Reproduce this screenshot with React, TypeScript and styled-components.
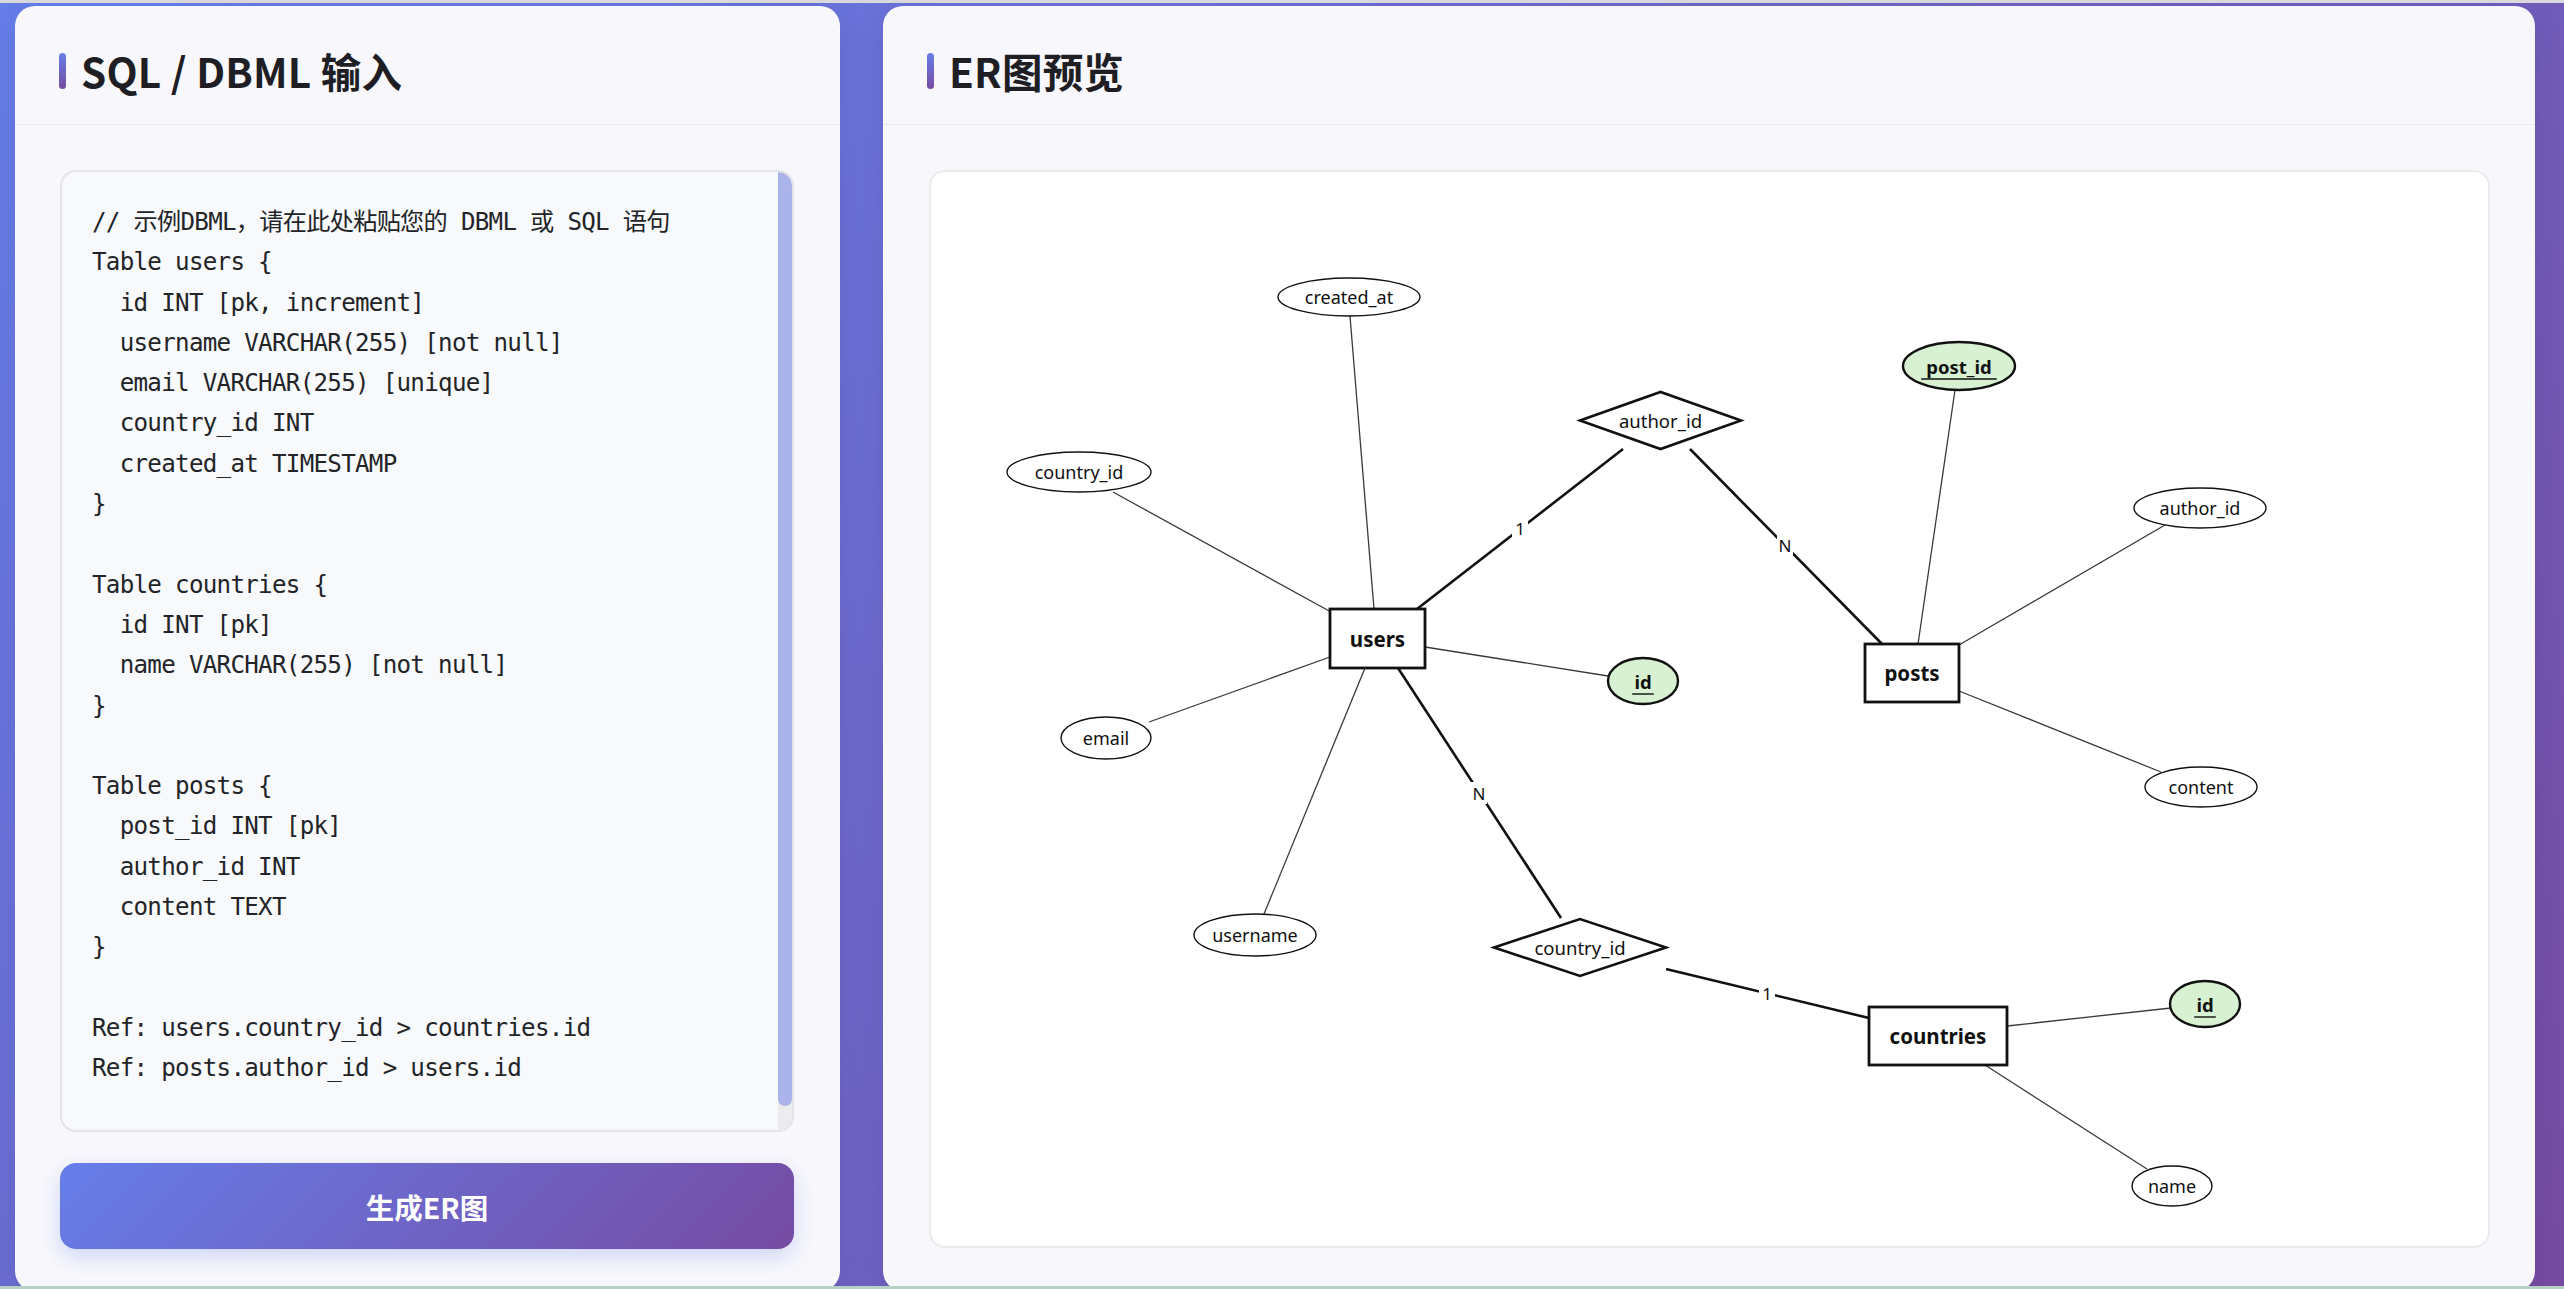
import React from 'react';
import styled, { createGlobalStyle } from 'styled-components';

const GlobalStyle = createGlobalStyle`
  html {
    background: #b6d0c3;
    overflow: hidden;
  }
  body {
    margin: 0;
    border-top: 3px solid #d9d9dc;
    font-family: "Noto Sans CJK SC", "Noto Sans", sans-serif;
    overflow: hidden;
  }
  * { box-sizing: border-box; }
`;

const Page = styled.div`
  height: 1283px;
  overflow: hidden;
  background: linear-gradient(135deg, #667eea 0%, #764ba2 100%);
  padding: 3px 29px 0 15px;
  display: grid;
  grid-template-columns: 825px 1652px;
  column-gap: 43px;
  align-items: stretch;
`;

const Panel = styled.section`
  background: #f8f8fc;
  border-radius: 20px;
  display: flex;
  flex-direction: column;
  box-shadow: 0 10px 30px rgba(40, 30, 90, 0.12);
`;

const PanelHeader = styled.header`
  display: flex;
  align-items: center;
  gap: 15px;
  padding: 47px 44px 35px;
  border-bottom: 1px solid #e9e9ef;
`;

const AccentBar = styled.span`
  flex: none;
  width: 7px;
  height: 36px;
  border-radius: 4px;
  background: linear-gradient(180deg, #667eea 0%, #764ba2 100%);
`;

const Title = styled.h2`
  margin: 0;
  font-family: "Noto Sans CJK SC", sans-serif;
  font-weight: 700;
  font-size: 40.5px;
  line-height: 36px;
  color: #1e1e24;
  letter-spacing: 0.2px;
`;

const PanelBody = styled.div<{ $pad: string }>`
  flex: 1;
  display: flex;
  flex-direction: column;
  padding: ${(p) => p.$pad};
  min-height: 0;
`;

const EditorFrame = styled.div`
  position: relative;
  height: 962px;
`;

const CodeInput = styled.textarea`
  display: block;
  width: 100%;
  height: 100%;
  resize: none;
  border: 2px solid #e3e3e8;
  border-radius: 16px;
  background: #f8f9fb;
  padding: 30px 44px 30px 30px;
  font-family: "DejaVu Sans Mono", "Noto Sans CJK SC", monospace;
  font-size: 24.2px;
  letter-spacing: -0.72px;
  line-height: 40.3px;
  color: #222428;
  outline: none;
  white-space: pre;
  overflow: hidden;
  scrollbar-width: none;
`;

const ScrollTrack = styled.div`
  position: absolute;
  top: 2px;
  right: 2px;
  bottom: 2px;
  width: 14px;
  background: #ececef;
  border-radius: 0 14px 14px 0;
  overflow: hidden;
  pointer-events: none;
`;

const ScrollThumb = styled.div`
  height: 934px;
  background: #aab4ea;
  border-radius: 0 14px 7px 7px;
`;

const GenerateButton = styled.button`
  margin-top: 31px;
  height: 86px;
  border: none;
  border-radius: 16px;
  background: linear-gradient(135deg, #667eea 0%, #764ba2 100%);
  color: #ffffff;
  font-family: "Noto Sans CJK SC", sans-serif;
  font-weight: 700;
  font-size: 28.5px;
  cursor: pointer;
  box-shadow: 0 8px 22px rgba(102, 126, 234, 0.28);
`;

const DiagramBox = styled.div`
  flex: 1;
  background: #ffffff;
  border: 2px solid #ebebee;
  border-radius: 16px;
  overflow: hidden;
`;

const DiagramSvg = styled.svg`
  display: block;
  width: 100%;
  height: 100%;
  font-family: "Noto Sans", "Open Sans", sans-serif;
`;

const AttrShape = styled.ellipse<{ $key?: boolean }>`
  fill: ${(p) => (p.$key ? '#d7f1d2' : '#ffffff')};
  stroke: #111;
  stroke-width: ${(p) => (p.$key ? 2.4 : 1.4)};
`;

const EntityShape = styled.rect`
  fill: #ffffff;
  stroke: #111;
  stroke-width: 2.8;
`;

const RelShape = styled.polygon`
  fill: #ffffff;
  stroke: #111;
  stroke-width: 2.6;
`;

const Edge = styled.line<{ $strong?: boolean }>`
  stroke: ${(p) => (p.$strong ? '#111' : '#3a3a3a')};
  stroke-width: ${(p) => (p.$strong ? 2.6 : 1.3)};
`;

const NodeText = styled.text<{ $bold?: boolean; $size: number }>`
  font-size: ${(p) => p.$size}px;
  font-weight: ${(p) => (p.$bold ? 700 : 400)};
  fill: #111;
`;

const Underline = styled.line`
  stroke: #111;
  stroke-width: 1.4;
`;

const LabelBg = styled.rect`
  fill: #ffffff;
`;

const CODE = `// 示例DBML，请在此处粘贴您的 DBML 或 SQL 语句
Table users {
  id INT [pk, increment]
  username VARCHAR(255) [not null]
  email VARCHAR(255) [unique]
  country_id INT
  created_at TIMESTAMP
}

Table countries {
  id INT [pk]
  name VARCHAR(255) [not null]
}

Table posts {
  post_id INT [pk]
  author_id INT
  content TEXT
}

Ref: users.country_id > countries.id
Ref: posts.author_id > users.id
`;

type Attr = { label: string; cx: number; cy: number; rx: number; ry: number; key?: boolean };
type Entity = { label: string; x: number; y: number; w: number; h: number };
type Rel = { label: string; cx: number; cy: number; hw: number; hh: number };
type Line = { x1: number; y1: number; x2: number; y2: number };
type StrongLine = Line & { label: string; lx: number; ly: number };

const attrs: Attr[] = [
  { label: 'created_at', cx: 1349, cy: 296, rx: 71, ry: 19 },
  { label: 'country_id', cx: 1079, cy: 471, rx: 72, ry: 20 },
  { label: 'email', cx: 1106, cy: 737, rx: 45, ry: 21 },
  { label: 'username', cx: 1255, cy: 934, rx: 61, ry: 21 },
  { label: 'id', cx: 1643, cy: 680, rx: 35, ry: 23, key: true },
  { label: 'post_id', cx: 1959, cy: 365, rx: 56, ry: 24, key: true },
  { label: 'author_id', cx: 2200, cy: 507, rx: 66, ry: 20 },
  { label: 'content', cx: 2201, cy: 786, rx: 56, ry: 20 },
  { label: 'id', cx: 2205, cy: 1003, rx: 35, ry: 23, key: true },
  { label: 'name', cx: 2172, cy: 1185, rx: 40, ry: 20 },
];

const entities: Entity[] = [
  { label: 'users', x: 1330, y: 608, w: 95, h: 59 },
  { label: 'posts', x: 1865, y: 643, w: 94, h: 58 },
  { label: 'countries', x: 1869, y: 1006, w: 138, h: 58 },
];

const rels: Rel[] = [
  { label: 'author_id', cx: 1660.5, cy: 419.5, hw: 80.5, hh: 28.5 },
  { label: 'country_id', cx: 1580, cy: 946.5, hw: 86, hh: 28.5 },
];

const thinEdges: Line[] = [
  { x1: 1350, y1: 315, x2: 1374, y2: 608 },
  { x1: 1113, y1: 491, x2: 1331, y2: 611 },
  { x1: 1149, y1: 721, x2: 1330, y2: 656 },
  { x1: 1264, y1: 913, x2: 1365, y2: 667 },
  { x1: 1425, y1: 646, x2: 1608, y2: 675 },
  { x1: 1955, y1: 389, x2: 1918, y2: 643 },
  { x1: 2165, y1: 524, x2: 1959, y2: 644 },
  { x1: 1959, y1: 690, x2: 2161, y2: 771 },
  { x1: 2007, y1: 1025, x2: 2171, y2: 1007 },
  { x1: 1985, y1: 1064, x2: 2147, y2: 1168 },
];

const strongEdges: StrongLine[] = [
  { x1: 1417, y1: 608, x2: 1623, y2: 448, label: '1', lx: 1520, ly: 527 },
  { x1: 1690, y1: 448, x2: 1882, y2: 643, label: 'N', lx: 1785, ly: 544 },
  { x1: 1398, y1: 667, x2: 1561, y2: 917, label: 'N', lx: 1479, ly: 792 },
  { x1: 1666, y1: 968, x2: 1869, y2: 1017, label: '1', lx: 1767, ly: 992 },
];

function ErDiagram() {
  return (
    <DiagramSvg viewBox="931 171 1557 1074" preserveAspectRatio="xMinYMin meet">
      {thinEdges.map((e, i) => (
        <Edge key={`t${i}`} x1={e.x1} y1={e.y1} x2={e.x2} y2={e.y2} />
      ))}
      {strongEdges.map((e, i) => (
        <g key={`s${i}`}>
          <Edge $strong x1={e.x1} y1={e.y1} x2={e.x2} y2={e.y2} />
          <LabelBg x={e.lx - 8} y={e.ly - 11} width={16} height={22} />
          <NodeText $size={17} x={e.lx} y={e.ly} textAnchor="middle" dominantBaseline="central">
            {e.label}
          </NodeText>
        </g>
      ))}
      {attrs.map((a, i) => (
        <g key={`a${i}`}>
          <AttrShape $key={a.key} cx={a.cx} cy={a.cy} rx={a.rx} ry={a.ry} />
          <NodeText
            $size={a.key ? 18.5 : 18}
            $bold={a.key}
            x={a.cx}
            y={a.cy}
            textAnchor="middle"
            dominantBaseline="central"
          >
            {a.label}
          </NodeText>
          {a.key && (
            <Underline
              x1={a.cx - a.label.length * 5.4}
              x2={a.cx + a.label.length * 5.4}
              y1={a.cy + 13}
              y2={a.cy + 13}
            />
          )}
        </g>
      ))}
      {rels.map((r, i) => (
        <g key={`r${i}`}>
          <RelShape
            points={`${r.cx - r.hw},${r.cy} ${r.cx},${r.cy - r.hh} ${r.cx + r.hw},${r.cy} ${r.cx},${r.cy + r.hh}`}
          />
          <NodeText $size={18.5} x={r.cx} y={r.cy} textAnchor="middle" dominantBaseline="central">
            {r.label}
          </NodeText>
        </g>
      ))}
      {entities.map((e, i) => (
        <g key={`e${i}`}>
          <EntityShape x={e.x} y={e.y} width={e.w} height={e.h} />
          <NodeText
            $size={20.5}
            $bold
            x={e.x + e.w / 2}
            y={e.y + e.h / 2}
            textAnchor="middle"
            dominantBaseline="central"
          >
            {e.label}
          </NodeText>
        </g>
      ))}
    </DiagramSvg>
  );
}

export default function App() {
  return (
    <>
      <GlobalStyle />
      <Page>
        <Panel>
          <PanelHeader>
            <AccentBar />
            <Title>SQL / DBML 输入</Title>
          </PanelHeader>
          <PanelBody $pad="45px 46px 41px 45px">
            <EditorFrame>
              <CodeInput defaultValue={CODE} spellCheck={false} />
              <ScrollTrack>
                <ScrollThumb />
              </ScrollTrack>
            </EditorFrame>
            <GenerateButton type="button">生成ER图</GenerateButton>
          </PanelBody>
        </Panel>
        <Panel>
          <PanelHeader>
            <AccentBar />
            <Title>ER图预览</Title>
          </PanelHeader>
          <PanelBody $pad="45px 45px 43px 46px">
            <DiagramBox>
              <ErDiagram />
            </DiagramBox>
          </PanelBody>
        </Panel>
      </Page>
    </>
  );
}
